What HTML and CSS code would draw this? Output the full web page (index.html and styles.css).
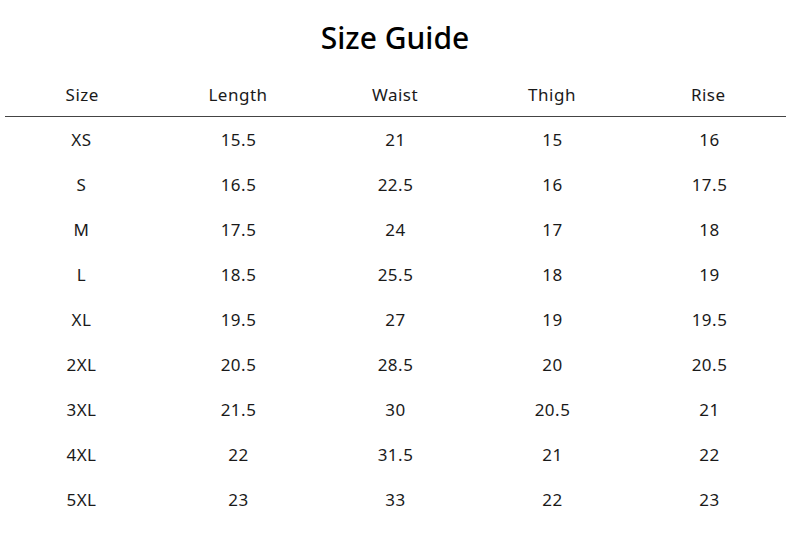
FILE: index.html
```html
<!DOCTYPE html>
<html>
<head>
<meta charset="utf-8">
<link rel="stylesheet" href="styles.css">
</head>
<body>
<h1 class="title">Size Guide</h1>
<div class="table">
  <div class="row head">
    <div>Size</div><div>Length</div><div>Waist</div><div>Thigh</div><div>Rise</div>
  </div>
  <div class="row"><div>XS</div><div>15.5</div><div>21</div><div>15</div><div>16</div></div>
  <div class="row"><div>S</div><div>16.5</div><div>22.5</div><div>16</div><div>17.5</div></div>
  <div class="row"><div>M</div><div>17.5</div><div>24</div><div>17</div><div>18</div></div>
  <div class="row"><div>L</div><div>18.5</div><div>25.5</div><div>18</div><div>19</div></div>
  <div class="row"><div>XL</div><div>19.5</div><div>27</div><div>19</div><div>19.5</div></div>
  <div class="row"><div>2XL</div><div>20.5</div><div>28.5</div><div>20</div><div>20.5</div></div>
  <div class="row"><div>3XL</div><div>21.5</div><div>30</div><div>20.5</div><div>21</div></div>
  <div class="row"><div>4XL</div><div>22</div><div>31.5</div><div>21</div><div>22</div></div>
  <div class="row"><div>5XL</div><div>23</div><div>33</div><div>22</div><div>23</div></div>
</div>
</body>
</html>
```
FILE: styles.css
```css
html, body {
  margin: 0;
  padding: 0;
  background: #fff;
}
body {
  font-family: "Noto Sans", "Open Sans", sans-serif;
  color: #1a1a1a;
  width: 790px;
}
.title {
  margin: 18px 0 14px;
  height: 40px;
  line-height: 40px;
  text-align: center;
  font-size: 30px;
  font-weight: 500;
  color: #000;
}
.table {
  width: 785px;
  margin-left: 3px;
}
.row {
  display: grid;
  grid-template-columns: repeat(5, 157px);
  height: 45px;
  align-items: center;
  font-size: 17px;
  letter-spacing: 0.5px;
  text-align: center;
}
.head {
  border-bottom: 1.5px solid #444;
  margin: 0 2px 0 2px;
  grid-template-columns: 154.5px 157px 157px 157px 155.5px;
  height: 45px;
  box-sizing: border-box;
}
```
